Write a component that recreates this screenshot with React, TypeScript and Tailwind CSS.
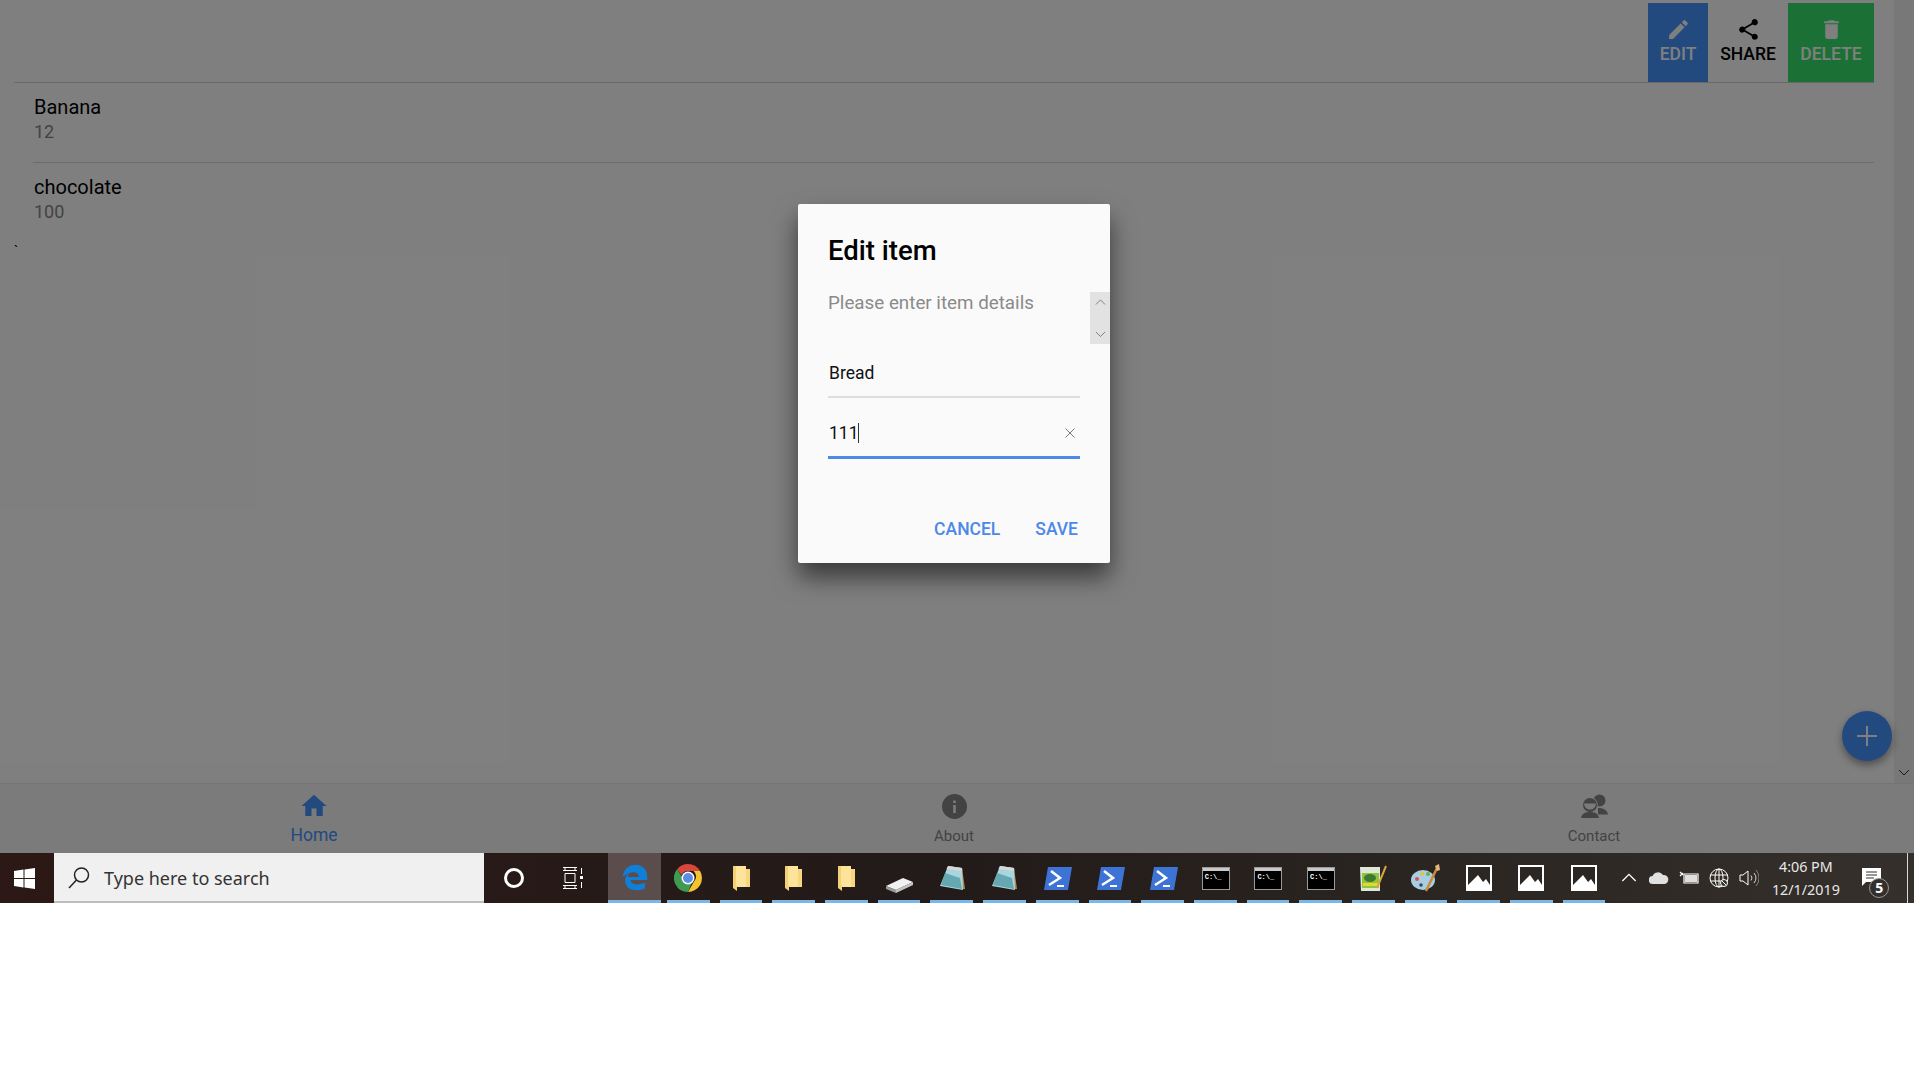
import React from 'react'

const Mi = ({ d, className }: { d: string; className?: string }) => (
  <svg viewBox="0 0 24 24" fill="currentColor" className={className}>
    <path d={d} />
  </svg>
)

const pencil =
  'M3 17.25V21h3.75L17.81 9.94l-3.75-3.75L3 17.25zM20.71 7.04c.39-.39.39-1.02 0-1.41l-2.34-2.34c-.39-.39-1.02-.39-1.41 0l-1.83 1.83 3.75 3.75 1.83-1.83z'
const share =
  'M18 16.08c-.76 0-1.44.3-1.96.77L8.91 12.7c.05-.23.09-.46.09-.7s-.04-.47-.09-.7l7.05-4.11c.54.5 1.25.81 2.04.81 1.66 0 3-1.34 3-3s-1.34-3-3-3-3 1.34-3 3c0 .24.04.47.09.7L8.04 9.81C7.5 9.31 6.79 9 6 9c-1.66 0-3 1.34-3 3s1.34 3 3 3c.79 0 1.5-.31 2.04-.81l7.12 4.16c-.05.21-.08.43-.08.65 0 1.61 1.31 2.92 2.92 2.92 1.61 0 2.92-1.31 2.92-2.92s-1.31-2.92-2.92-2.92z'
const trash = 'M6 19c0 1.1.9 2 2 2h8c1.1 0 2-.9 2-2V7H6v12zM19 4h-3.5l-1-1h-5l-1 1H5v2h14V4z'

const Chevron = ({ up, className }: { up?: boolean; className?: string }) => (
  <svg viewBox="0 0 12 7" fill="none" stroke="currentColor" strokeWidth="1" className={className}>
    <path d={up ? 'M1 6l5-5 5 5' : 'M1 1l5 5 5-5'} />
  </svg>
)

const ActionButton = ({
  icon,
  label,
  className,
}: {
  icon: string
  label: string
  className: string
}) => (
  <div className={`flex h-[79px] flex-col items-center pt-[14px] text-[17.5px] leading-[22px] font-medium ${className}`}>
    <Mi d={icon} className="h-[25px] w-[25px]" />
    <span className="mt-[1px]">{label}</span>
  </div>
)

const ListItem = ({ name, qty, last }: { name: string; qty: string; last?: boolean }) => (
  <div className={`ml-[19px] h-[80px] pt-[11px] ${last ? '' : 'border-b border-[#d8d8d8]'}`}>
    <div className="ml-[1px] text-[20px] leading-[26px] text-black">{name}</div>
    <div className="ml-[1px] text-[18px] leading-[24px] text-[#868686]">{qty}</div>
  </div>
)

const Folder = () => (
  <svg viewBox="0 0 17 26" className="h-[26px] w-[17px]">
    <path d="M0 1l13 0 0 20 4 0 0 1-13 0 0 4-4-3z" fill="#f3cf75" />
    <path d="M3 1h10v21H4.500L3 20z" fill="#fde49a" />
    <path d="M13 4h4v18h-4z" fill="#f7d67f" />
  </svg>
)

const Chrome = () => (
  <svg viewBox="0 0 28 28" className="h-[28px] w-[28px]">
    <path d="M14 0a14 14 0 0 1 12.100 7H14a7 7 0 0 0-6.500 4.300L3.300 5A14 14 0 0 1 14 0z" fill="#d9463c" />
    <path d="M26.100 7A14 14 0 0 1 14 28l6-10.500a7 7 0 0 0-.5-10.500z" fill="#f4c430" />
    <path d="M3.300 5l5.700 10a7 7 0 0 0 9 3.500L14 28A14 14 0 0 1 3.300 5z" fill="#3e9b4f" />
    <circle cx="14" cy="14" r="6.500" fill="#fff" />
    <circle cx="14" cy="14" r="5" fill="#5a8ee6" />
  </svg>
)

const Edge = () => (
  <svg viewBox="0 0 24 24" className="h-[28px] w-[28px]">
    <path
      d="M1.500 11.500C2.300 5.300 7 1.500 12.500 1.500c6 0 10 4 10 10.500v2.500H8.300c.3 3.800 5.800 5.300 12.200 2.300v5c-7.200 3.200-17 1.600-17-6.800 0-2.600 1.300-5 3.800-6.300-.8 1-1.300 2-1.400 3.200h9.400c0-4.500-6.400-5.800-12.600-.7z"
      fill="#0f7fd8"
    />
  </svg>
)

const Drive = () => (
  <svg viewBox="0 0 27 15" className="mt-[14px] h-[15px] w-[27px]">
    <path d="M0 8l17-8 10 4-17 8z" fill="#f1f1f1" />
    <path d="M0 8l10 4v3L0 11z" fill="#9a9a9a" />
    <path d="M10 12l17-8v3L10 15z" fill="#c4c4c4" />
  </svg>
)

const Notepad = () => (
  <svg viewBox="0 0 26 26" className="h-[26px] w-[26px]">
    <path d="M9 1l14 2 3 21-2 0z" fill="#b58a4a" />
    <path d="M9 1l14 2 1 22L1 21z" fill="#a9d6de" />
    <path d="M9 1l14 2 .3 3L7.500 4z" fill="#d8d8d8" />
    <path d="M6 8l15 5 2 11L2 20z" fill="#4f98a3" opacity=".75" />
  </svg>
)

const PowerShell = () => (
  <svg viewBox="0 0 28 23" className="ml-[2px] h-[23px] w-[28px]">
    <path d="M4 0h24l-4 23H0z" fill="#3e73d6" />
    <path d="M7 4l9 7-11 7" fill="none" stroke="#fff" strokeWidth="2.500" />
    <path d="M13 19h7" stroke="#fff" strokeWidth="2" />
  </svg>
)

const Cmd = () => (
  <div className="ml-[1px] flex h-[23px] w-[28px] flex-col border border-[#9a9a9a] bg-black">
    <div className="h-[3px] bg-[#c9c9c9]" />
    <div className="pl-[2px] font-['Liberation_Mono',monospace] text-[7px] leading-[12px] font-bold text-white">C:\_</div>
  </div>
)

const NotepadPlus = () => (
  <svg viewBox="0 0 27 26" className="h-[26px] w-[27px]">
    <path d="M0 2h20v24H1z" fill="#dfe8d8" />
    <path d="M2 8h17v15H2z" fill="#8cc63f" />
    <ellipse cx="10" cy="13" rx="6" ry="4" fill="#3d7a2f" />
    <path d="M3 18h15v3H3z" fill="#e6d730" />
    <path d="M26 1L17 23" stroke="#d9a441" strokeWidth="2" />
  </svg>
)

const Palette = () => (
  <svg viewBox="0 0 29 28" className="h-[28px] w-[29px]">
    <ellipse cx="12" cy="16" rx="12" ry="10" fill="#a9cde4" />
    <circle cx="6" cy="15" r="2" fill="#d9534f" />
    <circle cx="11" cy="10" r="2" fill="#e4c23c" />
    <circle cx="17" cy="10" r="2" fill="#6ab04c" />
    <circle cx="10" cy="21" r="1.800" fill="#394b5a" />
    <path d="M27 2L15 27" stroke="#c98a3a" strokeWidth="2.500" />
    <path d="M24 2l4-2 1 6-3 1z" fill="#e2b67c" />
  </svg>
)

const Photo = () => (
  <svg viewBox="0 0 26 26" className="h-[26px] w-[26px]">
    <path d="M0 0h26v26H0z" fill="#fff" />
    <path d="M2 2h22v18l-4-6-3 3-5-7-10 10z" fill="#2a2725" />
  </svg>
)

const tiles = [
  <Chrome />,
  <Folder />,
  <Folder />,
  <Folder />,
  <Drive />,
  <Notepad />,
  <Notepad />,
  <PowerShell />,
  <PowerShell />,
  <PowerShell />,
  <Cmd />,
  <Cmd />,
  <Cmd />,
  <NotepadPlus />,
  <Palette />,
  <Photo />,
  <Photo />,
  <Photo />,
]

export default function App() {
  return (
    <div className="min-h-[1080px] w-full bg-white font-['Roboto',sans-serif]">
      <div className="relative flex h-[853px] w-[1914px] flex-col overflow-hidden bg-white">
        <div className="flex min-h-0 flex-1">
          <div className="flex-1 pl-[14px] pr-[20px]">
            <div className="flex h-[83px] justify-end border-b border-[#d0d0d0] pt-[3px]">
              <ActionButton icon={pencil} label="EDIT" className="w-[60px] bg-[#4494ff] text-white" />
              <ActionButton icon={share} label="SHARE" className="w-[80px] text-black" />
              <ActionButton icon={trash} label="DELETE" className="w-[86px] bg-[#36e06a] text-white" />
            </div>
            <ListItem name="Banana" qty="12" />
            <ListItem name="chocolate" qty="100" last />
            <div className="mt-[1px] text-[14px] leading-none text-black">`</div>
          </div>
          <div className="flex w-[20px] flex-col items-center justify-end bg-[#f0f0f0] pb-[7px] text-[#333]">
            <Chevron className="w-[12px]" />
          </div>
        </div>

        <div className="ml-[-6px] grid h-[70px] w-[1920px] grid-cols-3 border-t border-[#e8e8e8] bg-[#f7f7f7]">
          <div className="flex flex-col items-center pt-[7px] text-[#4494ff]">
            <Mi d="M10 20v-6h4v6h5v-8h3L12 3 2 12h3v8z" className="h-[30px] w-[30px]" />
            <span className="mt-[3px] text-[17.5px] leading-[22px]">Home</span>
          </div>
          <div className="flex flex-col items-center pt-[10px] text-[#868686]">
            <svg viewBox="0 0 25 25" className="h-[25px] w-[25px]">
              <circle cx="12.500" cy="12.500" r="12.500" fill="currentColor" />
              <path d="M11.200 11h2.600v8h-2.600zM11.200 6.500h2.600v2.600h-2.600z" fill="#f7f7f7" />
            </svg>
            <span className="mt-[7px] text-[15px] leading-[20px]">About</span>
          </div>
          <div className="flex flex-col items-center pt-[10px] text-[#868686]">
            <svg viewBox="0 0 27 24" className="h-[24px] w-[27px]" fill="currentColor">
              <circle cx="18.500" cy="6.500" r="6" />
              <path d="M17 14c5 0 9 1.500 10 6.500H17z" />
              <circle cx="9" cy="11" r="7.800" fill="#f7f7f7" />
              <circle cx="9" cy="11" r="7" />
              <path d="M3 9.500h12c-.5 4-3 6-6 6s-5.500-2-6-6z" fill="#f7f7f7" />
              <path d="M0 24c.8-4 3.500-6 9-6s8.200 2 9 6z" />
            </svg>
            <span className="mt-[8px] text-[15px] leading-[20px]">Contact</span>
          </div>
        </div>

        <div className="absolute left-[1842px] top-[711px] flex h-[50px] w-[50px] items-center justify-center rounded-full bg-[#4494ff] shadow-[0_4px_8px_rgba(0,0,0,0.4)]">
          <svg viewBox="0 0 20 20" className="h-[20px] w-[20px]" stroke="white" strokeWidth="2">
            <path d="M10 0v20M0 10h20" />
          </svg>
        </div>

        <div className="absolute inset-0 bg-black/50" />

        <div className="absolute left-[798px] top-[204px] flex h-[359px] w-[312px] flex-col rounded-[2px] bg-[#fafafa] px-[30px] shadow-[0_14px_24px_rgba(0,0,0,0.55)]">
          <div className="mt-[29px] h-[36px] text-[27.5px] leading-[36px] font-medium text-black">Edit item</div>
          <div className="mt-[20px] h-[28px] text-[18.8px] leading-[28px] text-[#8a8a8a]">Please enter item details</div>
          <div className="flex h-[81px] items-end border-b-2 border-[#dedede] pb-[11px] pl-[1px] text-[17.500px] leading-[24px] text-[#111]">
            <span>Bread</span>
          </div>
          <div className="flex h-[61px] items-center justify-between border-b-[3px] border-[#4d8ae8] pl-[1px] pr-[5px] pt-[12px] text-[17.500px] text-[#111]">
            <span className="flex items-center">
              111<span className="ml-[-1px] h-[20px] w-px bg-[#333]" />
            </span>
            <svg viewBox="0 0 10 10" className="mb-[1px] h-[10px] w-[10px]" stroke="#777" strokeWidth="1">
              <path d="M.5.5l9 9M9.500.5l-9 9" />
            </svg>
          </div>
          <div className="mt-[59px] flex justify-end gap-[35px] pr-[2px] text-[17.500px] leading-[22px] font-medium text-[#4d88e8]">
            <span>CANCEL</span>
            <span>SAVE</span>
          </div>
          <div className="absolute left-[292px] top-[88px] flex h-[52px] w-[20px] flex-col items-center justify-between bg-[#e2e2e2] py-[7px] text-[#777]">
            <Chevron up className="w-[11px]" />
            <Chevron className="w-[11px]" />
          </div>
        </div>
      </div>

      <div className="flex h-[50px] w-[1914px] bg-gradient-to-r from-[#2c1815] via-[#221b19] to-[#35302b] font-['Noto_Sans',sans-serif] text-white">
        <div className="flex w-[54px] items-center pl-[14px]">
          <svg viewBox="0 0 21 21" className="h-[21px] w-[21px]" fill="white">
            <path d="M0 3l9.500-1.500V10H0zM10.500 1.400L21 0v10h-10.500zM0 11h9.500v8.500L0 18zM10.500 11H21v10l-10.500-1.400z" />
          </svg>
        </div>
        <div className="flex w-[430px] items-center border-b-2 border-[#bdbdbd] bg-[#f0f0f0] pl-[14px] pt-[1px] text-[#333]">
          <svg viewBox="0 0 22 22" className="h-[22px] w-[22px]" fill="none" stroke="#222" strokeWidth="1.500">
            <circle cx="13.500" cy="8" r="7" />
            <path d="M8.500 13L1 21" />
          </svg>
          <span className="ml-[14px] text-[18px] leading-none">Type here to search</span>
        </div>
        <div className="flex w-[60px] items-center justify-center">
          <div className="h-[20px] w-[20px] rounded-full border-[3px] border-white" />
        </div>
        <div className="flex w-[58px] items-center justify-center">
          <svg viewBox="0 0 22 22" className="h-[22px] w-[22px]" fill="none" stroke="white" strokeWidth="1">
            <path d="M1 .5h14M3 .5v3M13 .5v3M1 3.500h14M3 6.500h10v9H3zM1 18.500h14M3 18.500v3M13 18.500v3M1 21.500h14M19.500 1v6M19.500 15v6" />
            <path d="M18 9h3v3h-3z" fill="white" stroke="none" />
          </svg>
        </div>
        <div className="ml-[6px] flex h-full">
          <div className="mr-[1px] flex h-full w-[53px] items-center justify-center border-b-[3px] border-[#7ab6e6] bg-[#5a4d4b]">
            <Edge />
          </div>
          {tiles.map((icon, i) => (
            <div key={i} className="relative flex h-full w-[52.700px] items-center justify-center">
              {icon}
              <div className="absolute inset-x-[5px] bottom-0 h-[3px] bg-[#7ab6e6]" />
            </div>
          ))}
        </div>

        <div className="ml-[4px] flex items-center">
          <div className="flex w-[30px] justify-center">
            <Chevron up className="w-[16px]" />
          </div>
          <div className="flex w-[30px] justify-center">
            <svg viewBox="0 0 20 14" className="h-[14px] w-[20px]">
              <path d="M4 13a4 4 0 0 1-.5-8A6 6 0 0 1 14 4a4.500 4.500 0 0 1 1.500 9z" fill="#e0e0e0" />
            </svg>
          </div>
          <div className="flex w-[30px] justify-center">
            <svg viewBox="0 0 20 14" className="h-[14px] w-[20px]" fill="none" stroke="white" strokeWidth="1.200">
              <path d="M5 3h14v9H5z" />
              <path d="M1 1l3 3M1 5l3-3" />
              <path d="M6 4h12v7H6z" fill="white" stroke="none" opacity=".85" />
            </svg>
          </div>
          <div className="flex w-[30px] justify-center">
            <svg viewBox="0 0 20 20" className="h-[20px] w-[20px]" fill="none" stroke="white" strokeWidth="1">
              <circle cx="10" cy="10" r="9" />
              <ellipse cx="10" cy="10" rx="4" ry="9" />
              <path d="M1 7h18M1 13h18M10 1v18" />
              <circle cx="15" cy="15" r="3.500" fill="#35302b" />
              <path d="M13 13l4 4" />
            </svg>
          </div>
          <div className="flex w-[29px] justify-center">
            <svg viewBox="0 0 20 20" className="h-[20px] w-[20px]" fill="none" stroke="white" strokeWidth="1">
              <path d="M1 7h3l5-4v14l-5-4H1z" />
              <path d="M12 7.500a4 4 0 0 1 0 5M15 5a8 8 0 0 1 0 10" opacity=".8" />
              <path d="M17 2a12 12 0 0 1 0 16" opacity=".4" />
            </svg>
          </div>
        </div>
        <div className="flex w-[85px] flex-col items-center justify-center text-[14.300px] leading-[23px] text-[#e8e8e8]">
          <span>4:06 PM</span>
          <span>12/1/2019</span>
        </div>
        <div className="relative flex w-[50px] items-center justify-center">
          <svg viewBox="0 0 19 18" className="mb-[3px] ml-[-4px] h-[18px] w-[19px]">
            <path d="M0 0h19v14H4l-4 4z" fill="white" />
            <path d="M4 4h11M4 7h11M4 10h8" stroke="#35302b" strokeWidth="1" />
          </svg>
          <div className="absolute left-[21px] top-[25px] flex h-[20px] w-[20px] items-center justify-center rounded-full border border-[#999] bg-[#33302c] text-[14px] leading-none font-bold">
            5
          </div>
        </div>
        <div className="ml-[9px] h-full w-px bg-[#d8d8d8]" />
      </div>
    </div>
  )
}
